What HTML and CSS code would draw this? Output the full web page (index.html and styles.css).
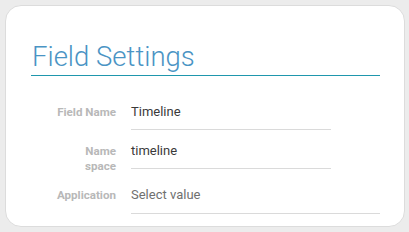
FILE: index.html
```html
<!DOCTYPE html>
<html>
<head>
<meta charset="utf-8">
<link rel="stylesheet" href="styles.css">
</head>
<body>
<div class="card">
  <h1 class="title">Field Settings</h1>
  <div class="rows">
    <div class="row">
      <div class="label">Field Name</div>
      <div class="field">Timeline</div>
    </div>
    <div class="row">
      <div class="label">Name<br>space</div>
      <div class="field">timeline</div>
    </div>
    <div class="row">
      <div class="label">Application</div>
      <div class="field wide placeholder">Select value</div>
    </div>
  </div>
</div>
</body>
</html>
```
FILE: styles.css
```css
html, body {
  margin: 0;
  padding: 0;
  background: #ececec;
  font-family: Roboto, "Liberation Sans", sans-serif;
}
body {
  padding: 5px 0 0 5px;
}
.card {
  box-sizing: border-box;
  width: 400px;
  height: 222px;
  background: #ffffff;
  border: 1px solid #dcdcdc;
  border-radius: 16px;
  padding: 34px 24px 0 25px;
}
.title {
  margin: 0;
  font-family: "Roboto Light", Roboto, sans-serif;
  font-size: 27.5px;
  font-weight: 300;
  line-height: 34px;
  color: #4a94c4;
  padding: 0 0 1px 1px;
  border-bottom: 1px solid #1f97ad;
}
.rows {
  display: flex;
  flex-direction: column;
  gap: 13px;
  padding-top: 28px;
}
.row {
  display: flex;
  align-items: baseline;
}
.label {
  width: 85px;
  flex: none;
  text-align: right;
  font-size: 11.6px;
  font-weight: 700;
  line-height: 15px;
  color: #b8b8b8;
}
.field {
  margin-left: 15px;
  width: 200px;
  font-size: 13px;
  line-height: 16px;
  color: #3a3a3a;
  padding-bottom: 9px;
  border-bottom: 1px solid #dadada;
}
.field.wide {
  width: 249px;
  padding-bottom: 10px;
}
.placeholder {
  color: #707070;
}
```
